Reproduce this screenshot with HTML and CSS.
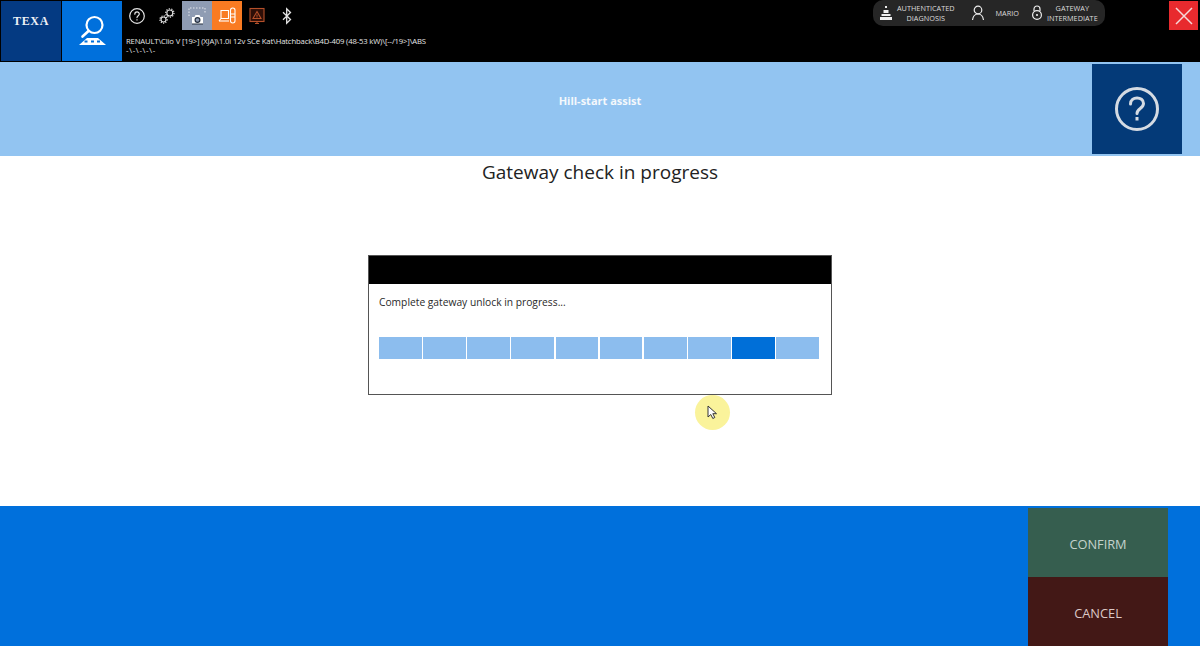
FILE: index.html
```html
<!DOCTYPE html>
<html lang="en">
<head>
<meta charset="utf-8">
<title>Hill-start assist</title>
<link rel="stylesheet" href="styles.css">
</head>
<body>
<div class="app">
  <header class="topbar">
    <div class="tile tile-brand"><span class="brand">TEXA</span></div>
    <div class="tile tile-search">
      <svg width="50" height="50" viewBox="0 0 50 50" fill="none" stroke="#fff">
        <circle cx="27.500" cy="19" r="8" stroke-width="2.200"/>
        <path d="M21.500 25l-6 5.500" stroke-width="2.600" stroke-linecap="round"/>
        <path d="M20 32h11l8 7H12z" fill="#fff" stroke="none"/>
        <path d="M17.500 35.500h3M24 35.500h3M30 35.500h3" stroke="#0070dc" stroke-width="2"/>
      </svg>
    </div>
    <div class="info">
      <div class="tools">
        <div class="tool">
          <svg width="18" height="18" viewBox="0 0 18 18" fill="none" stroke="#e4e4e4" stroke-width="1.200">
            <circle cx="9" cy="9" r="7.300"/>
            <path d="M6.800 7.200c0-3 4.500-3 4.500-.2 0 1.700-2.300 1.700-2.300 3.600" stroke-linecap="round"/>
            <path d="M9 12.200v1.200"/>
          </svg>
        </div>
        <div class="tool">
          <svg width="18" height="18" viewBox="0 0 18 18" fill="none" stroke="#e4e4e4">
            <circle cx="11.800" cy="6" r="3" stroke-width="1.100"/>
            <circle cx="11.800" cy="6" r="4.200" stroke-width="1.200" stroke-dasharray="1.200 1.400"/>
            <circle cx="5.500" cy="12.500" r="2.500" stroke-width="1.100"/>
            <circle cx="5.500" cy="12.500" r="3.600" stroke-width="1.200" stroke-dasharray="1.200 1.200"/>
          </svg>
        </div>
        <div class="tool tool-camera">
          <svg width="30" height="29" viewBox="0 0 30 29" fill="none">
            <path d="M7 15V7h16v5" stroke="#e6e8ee" stroke-width="1" stroke-dasharray="1.500 1.500"/>
            <path d="M10 16h2.500l1-2h4l1 2H21v7H10z" fill="#fff"/>
            <circle cx="15.500" cy="19" r="2.400" fill="#8f9cb3" stroke="#263040" stroke-width="1.200"/>
            <path d="M10 23h11" stroke="#263040" stroke-width="1"/>
          </svg>
        </div>
        <div class="tool tool-orange">
          <svg width="18" height="18" viewBox="0 0 18 18" fill="none" stroke="#fff" stroke-width="1.100">
            <path d="M3 3.500h7.500v8H3zM1 14l2-2.500h7.500"/>
            <path d="M1 14h10"/>
            <rect x="12.500" y="1" width="4.500" height="15" rx="2.200"/>
            <path d="M12.500 7h4.500M12.500 10h4.500"/>
          </svg>
        </div>
        <div class="tool">
          <svg width="20" height="20" viewBox="0 0 20 20" fill="none" stroke="#b5502a" stroke-width="1.100">
            <rect x="3" y="2.500" width="14" height="13" fill="#2e0f08"/>
            <path d="M10 5.500l4 7H6z"/>
            <path d="M10 8.500v2.300M10 11.500v.8"/>
            <path d="M8 17.500h4M10 15.500v2"/>
          </svg>
        </div>
        <div class="tool">
          <svg width="16" height="18" viewBox="0 0 16 18" fill="none" stroke="#e4e4e4" stroke-width="1.300">
            <path d="M4 5.200l7.500 7.300-3.800 3.700V1.800l3.800 3.700L4 12.800"/>
          </svg>
        </div>
      </div>
      <div class="path">
        <div>RENAULT\Clio V [19&gt;] (XJA)\1.0i 12v SCe Kat\Hatchback\B4D-409 (48-53 kW)\[--/19&gt;]\ABS</div>
        <div class="path-sub">-\-\-\-\-</div>
      </div>
    </div>
    <div class="session">
      <div class="session-item">
        <svg width="14" height="16" viewBox="0 0 14 16" fill="#eee">
          <rect x="6" y="1" width="2" height="2"/>
          <path d="M4.500 5h5v3h-5z"/>
          <path d="M2.500 9h9v2h-9z"/>
          <path d="M1 12h12v3H1z"/>
        </svg>
        <span class="session-text">AUTHENTICATED<br>DIAGNOSIS</span>
      </div>
      <div class="session-item s-user">
        <svg width="14" height="16" viewBox="0 0 14 16" fill="none" stroke="#eee" stroke-width="1.200">
          <circle cx="7" cy="5" r="3.800"/>
          <path d="M1.500 15c.5-3.500 2.500-6 5.500-6s5 2.500 5.500 6"/>
        </svg>
        <span class="session-text">MARIO</span>
      </div>
      <div class="session-item s-gate">
        <svg width="12" height="16" viewBox="0 0 12 16" fill="none" stroke="#eee" stroke-width="1.200">
          <path d="M3 6V4a3 3 0 0 1 6 0v2"/>
          <circle cx="6" cy="10" r="4.400"/>
          <circle cx="6" cy="10" r="1.100" fill="#eee" stroke="none"/>
        </svg>
        <span class="session-text">GATEWAY<br>INTERMEDIATE</span>
      </div>
    </div>
    <button class="close" aria-label="Close">
      <svg width="20" height="20" viewBox="0 0 20 20" stroke="#f6d9d9" stroke-width="1.500" fill="none">
        <path d="M2 2l16 16M18 2L2 18"/>
      </svg>
    </button>
  </header>

  <section class="band">
    <div class="band-title">Hill-start assist</div>
    <button class="help" aria-label="Help">
      <svg width="46" height="46" viewBox="0 0 46 46" fill="none" stroke="#d5dbe3" stroke-width="3">
        <circle cx="23" cy="23" r="20.500"/>
        <path d="M16.500 18c0-8 13-8 13-.5 0 5-6.500 5-6.500 10" stroke-linecap="round"/>
        <path d="M23 31v3.500"/>
      </svg>
    </button>
  </section>

  <main class="content">
    <h1 class="title">Gateway check in progress</h1>
    <div class="dialog">
      <div class="dialog-head"></div>
      <div class="dialog-body">
        <p class="message">Complete gateway unlock in progress...</p>
        <div class="progress">
          <span class="seg"></span><span class="seg"></span><span class="seg"></span><span class="seg"></span><span class="seg"></span>
          <span class="seg"></span><span class="seg"></span><span class="seg"></span><span class="seg seg-active"></span><span class="seg"></span>
        </div>
      </div>
    </div>
  </main>

  <footer class="footer">
    <div class="actions">
      <button class="action confirm">CONFIRM</button>
      <button class="action cancel">CANCEL</button>
    </div>
  </footer>

  <div class="pointer">
    <svg width="11" height="15" viewBox="0 0 11 15">
      <path d="M1 1v11l2.800-2.500 2 4 2-1-2-3.800H9.500z" fill="#fff" stroke="#333" stroke-width="1"/>
    </svg>
  </div>
</div>
</body>
</html>
```

FILE: styles.css
```css
* { box-sizing: border-box; }
html, body { margin: 0; padding: 0; }
body { font-family: "Open Sans", "Noto Sans", sans-serif; background: #fff; overflow: hidden; }
button { font-family: inherit; border: 0; padding: 0; }

.app { position: relative; width: 1200px; height: 646px; display: flex; flex-direction: column; }

.topbar { height: 62px; background: #000; display: flex; align-items: flex-start; padding: 1px 2px 0 1px; color: #e8e8e8; }
.tile { width: 60px; height: 60px; display: flex; align-items: center; justify-content: center; flex: none; }
.tile-brand { background: #043a82; }
.tile-brand .brand { font-family: "Liberation Serif", serif; font-weight: 700; font-size: 12px; letter-spacing: .7px; color: #eef1f6; margin-top: -20px; }
.tile-search { background: #0070dc; margin-left: 1px; }

.info { width: 320px; flex: none; }
.tools { display: flex; height: 29px; }
.tool { width: 30px; height: 29px; display: flex; align-items: center; justify-content: center; flex: none; }
.tool-camera { background: #8f9cb3; }
.tool-orange { background: #f97b22; }
.path { font-size: 7.700px; letter-spacing: -.155px; line-height: 9px; margin: 7px 0 0 4px; white-space: nowrap; color: #e6e6e6; }
.path-sub { letter-spacing: .7px; }

.session { margin-left: 431px; width: 232px; height: 26px; margin-top: -1px; background: #262626; border-radius: 10px; display: flex; align-items: center; padding-left: 6px; flex: none; }
.session-item { display: flex; align-items: center; gap: 4px; }
.session-text { font-size: 7.300px; line-height: 10px; text-align: center; color: #dcdcdc; white-space: nowrap; }
.s-user { margin-left: 16px; gap: 11px; }
.s-gate { margin-left: 12px; gap: 4px; }

.close { margin-left: auto; width: 29px; height: 29px; background: #e82a2e; display: flex; align-items: center; justify-content: center; flex: none; }

.band { height: 94px; background: #92c4f1; display: flex; align-items: center; justify-content: center; position: relative; }
.band-title { font-size: 11px; font-weight: 700; color: #f4f8fc; margin-top: -18px; }
.help { position: absolute; left: 1092px; top: 2px; width: 90px; height: 90px; background: #043a78; display: flex; align-items: center; justify-content: center; }

.content { height: 350px; display: flex; flex-direction: column; align-items: center; background: #fff; }
.title { margin: 2px 0 0; font-size: 19px; line-height: 28px; font-weight: 400; color: #222; }
.dialog { width: 464px; height: 140px; margin-top: 69px; border: 1px solid #555; background: #fff; }
.dialog-head { height: 28px; background: #000; }
.dialog-body { padding: 0 12px 0 10px; }
.message { margin: 10px 0 0; font-size: 10.250px; line-height: 16px; color: #2a2a2a; }
.progress { display: grid; grid-template-columns: repeat(10, 1fr); gap: 1.500px; height: 22px; margin-top: 27px; }
.seg { background: #8cbdee; }
.seg-active { background: #006fd8; }

.footer { height: 140px; background: #0070dc; display: flex; justify-content: flex-end; padding-right: 32px; padding-top: 2px; }
.actions { width: 140px; display: flex; flex-direction: column; }
.action { height: 69px; padding-top: 2px; font-size: 12.800px; display: block; width: 100%; }
.confirm { background: #365e4f; color: #c4d2cc; }
.cancel { background: #431816; color: #dcc8c6; }

.pointer { position: absolute; left: 695px; top: 395px; width: 35px; height: 35px; border-radius: 50%; background: #faf39b; display: flex; align-items: center; justify-content: center; }
```
